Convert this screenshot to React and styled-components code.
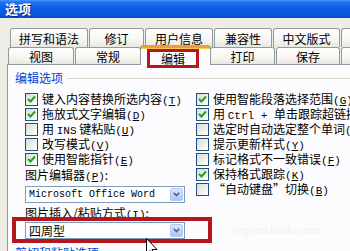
import React from "react";
import styled, { createGlobalStyle } from "styled-components";

const GlobalStyle = createGlobalStyle`
  html, body {
    margin: 0;
    padding: 0;
    width: 350px;
    height: 251px;
    overflow: hidden;
    background: #eeede5;
  }
  body {
    font-family: "Noto Sans CJK SC", "Noto Sans", sans-serif;
    font-size: 12px;
    color: #000;
  }
`;

const Window = styled.div`
  position: relative;
  width: 350px;
  height: 251px;
  overflow: hidden;
  background: #eeede5;
  display: flex;
  flex-direction: column;
`;

const TitleBar = styled.div`
  height: 18px;
  flex-shrink: 0;
  padding-left: 5px;
  line-height: 18px;
  font-size: 13px;
  font-weight: bold;
  color: #fff;
  text-shadow: 1px 1px 0 #0b2a8a;
  background: linear-gradient(180deg, #4a95fa 0%, #1c6ef0 14%, #0a5de4 50%, #0757dc 85%, #0049c6 100%);
`;

const TabArea = styled.div`
  padding-top: 10px;
  flex-shrink: 0;
`;

const TabRow = styled.div`
  display: flex;
  align-items: flex-end;
  gap: 1px;
  height: ${(p) => p.$h}px;
  padding-left: ${(p) => p.$indent}px;
  white-space: nowrap;
`;

const Tab = styled.div`
  position: relative;
  box-sizing: border-box;
  flex-shrink: 0;
  width: ${(p) => p.$w}px;
  height: 100%;
  border: 1px solid #919b9c;
  border-bottom: none;
  border-radius: 3px 3px 0 0;
  background: linear-gradient(180deg, #ffffff 0%, #f6f5f1 60%, #e8e7e0 100%);
  display: flex;
  align-items: center;
  justify-content: center;
  padding-top: 1px;
  line-height: 14px;
`;

const ActiveTab = styled(Tab)`
  z-index: 2;
  height: 20px;
  margin: 0 -2px -1px;
  align-self: flex-end;
  border-top: 3px solid #e9a23b;
  border-radius: 3px 3px 0 0;
  background: #fcfcfe;
  box-shadow: inset 0 1px 0 #ffc94a;
`;

const RedMark = styled.span`
  position: absolute;
  left: 6px;
  top: 1px;
  width: 52px;
  height: 19px;
  box-sizing: border-box;
  border: 3px solid #b5161d;
  display: flex;
  align-items: center;
  justify-content: center;
`;

const Panel = styled.div`
  position: relative;
  flex: 1;
  margin-left: 7px;
  border-left: 1px solid #919b9c;
  border-top: 1px solid #919b9c;
  background: #fcfcfe;
  padding: 6px 0 0 7px;
`;

const GroupLabel = styled.div`
  display: flex;
  align-items: center;
  gap: 4px;
  height: 14px;
  line-height: 14px;
  color: #0046d5;
  white-space: nowrap;
  margin-top: ${(p) => p.$mt || 0}px;

  &::after {
    content: "";
    flex: 1;
    border-top: 1px solid #d6d5c8;
  }
`;

const OptionsGrid = styled.div`
  display: grid;
  grid-template-columns: 171px 1fr;
  margin: 7px 0 0 10px;
`;

const Column = styled.div`
  display: flex;
  flex-direction: column;
  min-width: 0;
`;

const CheckRow = styled.div`
  display: flex;
  align-items: center;
  gap: 4px;
  height: 15px;
  line-height: 15px;
  white-space: nowrap;
`;

const Box = styled.span`
  flex-shrink: 0;
  width: 13px;
  height: 13px;
  box-sizing: border-box;
  border: 1px solid #1c5180;
  background: linear-gradient(135deg, #dcdcd5 0%, #f4f4f0 70%, #ffffff 100%);
  display: flex;
  align-items: center;
  justify-content: center;
`;

const Mono = styled.span`
  font-family: "Liberation Mono", "DejaVu Sans Mono", monospace;
  font-size: 11px;
  line-height: 15px;
`;

const Caption = styled.div`
  height: 15px;
  line-height: 15px;
  white-space: nowrap;
  margin-top: ${(p) => p.$mt || 0}px;
`;

const Combo = styled.div`
  position: relative;
  box-sizing: border-box;
  width: 160px;
  height: 17px;
  margin-top: ${(p) => p.$mt || 0}px;
  border: 1px solid #7f9db9;
  background: #fff;
  display: flex;
  align-items: center;
  justify-content: space-between;
  padding-left: 3px;
  white-space: nowrap;
  font-family: ${(p) =>
    p.$mono
      ? `"Liberation Mono", "DejaVu Sans Mono", monospace`
      : `"Noto Sans CJK SC", "Noto Sans", sans-serif`};
  font-size: ${(p) => (p.$mono ? 10 : 12)}px;

  ${(p) =>
    p.$marked &&
    `&::after {
      content: "";
      position: absolute;
      left: -14px;
      top: -6px;
      width: 200px;
      height: 26px;
      box-sizing: border-box;
      border: 4px solid #b5161d;
      pointer-events: none;
    }`}
`;

const DropButton = styled.span`
  box-sizing: border-box;
  width: 13px;
  height: 13px;
  margin-right: 1px;
  border: 1px solid #b4c8f2;
  border-radius: 2px;
  background: linear-gradient(180deg, #d8e4fd 0%, #bfd1fb 60%, #aec4f6 100%);
  display: flex;
  align-items: center;
  justify-content: center;
`;

const Watermark = styled.div`
  position: absolute;
  left: 232px;
  top: 224px;
  font-family: "Liberation Sans", sans-serif;
  font-size: 11px;
  color: #efefef;
  filter: blur(0.7px);
`;

const Cursor = styled.svg`
  position: absolute;
  left: 146px;
  top: 238px;
`;

const Acc = ({ k }) => (
  <Mono>
    (<u>{k}</u>)
  </Mono>
);

const Check = ({ on, children }) => (
  <CheckRow>
    <Box>
      {on && (
        <svg width="9" height="9" viewBox="0 0 9 9">
          <polyline points="1,4 3.5,6.5 8,1.5" fill="none" stroke="#21a121" strokeWidth="2" />
        </svg>
      )}
    </Box>
    <span>{children}</span>
  </CheckRow>
);

const Chevron = () => (
  <svg width="7" height="5" viewBox="0 0 7 5">
    <polyline points="0.8,0.8 3.5,3.6 6.2,0.8" fill="none" stroke="#4d6185" strokeWidth="1.6" />
  </svg>
);

const row1 = [
  ["拼写和语法", 78],
  ["修订", 55],
  ["用户信息", 68],
  ["兼容性", 58],
  ["中文版式", 67],
  ["", 30],
];

const row2 = [
  ["视图", 66],
  ["常规", 66],
  ["编辑", 71, true],
  ["打印", 65],
  ["保存", 64],
  ["", 30],
];

export default function App() {
  return (
    <>
      <GlobalStyle />
      <Window>
        <TitleBar>选项</TitleBar>
        <TabArea>
          <TabRow $h={19} $indent={10}>
            {row1.map(([t, w], i) => (
              <Tab key={i} $w={w}>{t}</Tab>
            ))}
          </TabRow>
          <TabRow $h={17} $indent={8}>
            {row2.map(([t, w, active], i) =>
              active ? (
                <ActiveTab key={i} $w={w}>
                  <RedMark>{t}</RedMark>
                </ActiveTab>
              ) : (
                <Tab key={i} $w={w}>{t}</Tab>
              )
            )}
          </TabRow>
        </TabArea>
        <Panel>
          <GroupLabel>编辑选项</GroupLabel>
          <OptionsGrid>
            <Column>
              <Check on>键入内容替换所选内容<Acc k="T" /></Check>
              <Check on>拖放式文字编辑<Acc k="D" /></Check>
              <Check>用 <Mono>INS</Mono> 键粘贴<Acc k="U" /></Check>
              <Check>改写模式<Acc k="V" /></Check>
              <Check on>使用智能指针<Acc k="E" /></Check>
              <Caption>图片编辑器<Acc k="P" />:</Caption>
              <Combo $mono $mt={4}>
                Microsoft Office Word
                <DropButton><Chevron /></DropButton>
              </Combo>
              <Caption $mt={2}>图片插入/粘贴方式<Acc k="I" />:</Caption>
              <Combo $mt={2} $marked>
                四周型
                <DropButton><Chevron /></DropButton>
              </Combo>
            </Column>
            <Column>
              <Check on>使用智能段落选择范围<Acc k="G" /></Check>
              <Check on>用 <Mono>Ctrl + </Mono>单击跟踪超链接<Acc k="H" /></Check>
              <Check>选定时自动选定整个单词<Acc k="W" /></Check>
              <Check>提示更新样式<Acc k="Y" /></Check>
              <Check>标记格式不一致错误<Acc k="F" /></Check>
              <Check on>保持格式跟踪<Acc k="K" /></Check>
              <Check>“自动键盘”切换<Acc k="B" /></Check>
            </Column>
          </OptionsGrid>
          <GroupLabel $mt={7}>剪切和粘贴选项</GroupLabel>
        </Panel>
        <Watermark>jingyan.baidu.com</Watermark>
        <Cursor width="12" height="19" viewBox="0 0 12 19">
          <path d="M0.5,0.5 L0.5,16 L4,12.5 L6.5,18 L8.5,17 L6,11.5 L11,11.5 Z" fill="#fff" stroke="#000" strokeWidth="1" />
        </Cursor>
      </Window>
    </>
  );
}
